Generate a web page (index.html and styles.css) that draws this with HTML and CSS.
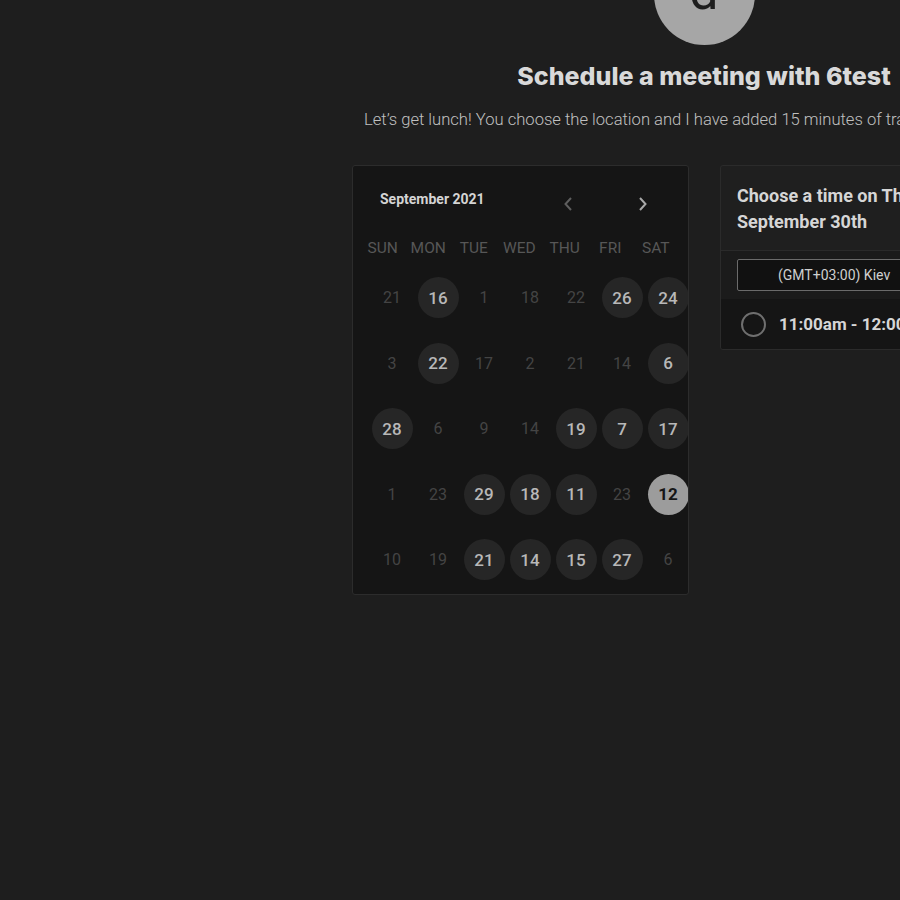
FILE: index.html
```html
<!DOCTYPE html>
<html lang="en">
<head>
<meta charset="utf-8">
<title>Schedule a meeting with 6test</title>
<link rel="stylesheet" href="styles.css">
</head>
<body>
<div class="page">
  <header class="intro">
    <div class="avatar"><span>d</span></div>
    <h1 class="title">Schedule a meeting with 6test</h1>
    <p class="desc">Let’s get lunch! You choose the location and I have added 15 minutes of travel time before and after the meeting.</p>
  </header>
  <main class="content">
    <section class="calendar">
      <div class="cal-head">
        <span class="month">September 2021</span>
        <div class="nav">
          <span class="chev prev"><svg width="10" height="16" viewBox="0 0 10 16"><path d="M8 2 L2.5 8 L8 14" fill="none" stroke="currentColor" stroke-width="2"/></svg></span>
          <span class="chev next"><svg width="10" height="16" viewBox="0 0 10 16"><path d="M2 2 L7.5 8 L2 14" fill="none" stroke="currentColor" stroke-width="2"/></svg></span>
        </div>
      </div>
      <div class="weekdays">
        <span>SUN</span><span>MON</span><span>TUE</span><span>WED</span><span>THU</span><span>FRI</span><span>SAT</span>
      </div>
      <div class="days">
        <span class="day">21</span><span class="day on">16</span><span class="day">1</span><span class="day">18</span><span class="day">22</span><span class="day on">26</span><span class="day on">24</span>
        <span class="day">3</span><span class="day on">22</span><span class="day">17</span><span class="day">2</span><span class="day">21</span><span class="day">14</span><span class="day on">6</span>
        <span class="day on">28</span><span class="day">6</span><span class="day">9</span><span class="day">14</span><span class="day on">19</span><span class="day on">7</span><span class="day on">17</span>
        <span class="day">1</span><span class="day">23</span><span class="day on">29</span><span class="day on">18</span><span class="day on">11</span><span class="day">23</span><span class="day sel">12</span>
        <span class="day">10</span><span class="day">19</span><span class="day on">21</span><span class="day on">14</span><span class="day on">15</span><span class="day on">27</span><span class="day">6</span>
      </div>
    </section>
    <section class="times">
      <div class="times-head">Choose a time on Thursday, September 30th</div>
      <div class="tz"><div class="tz-select">(GMT+03:00) Kiev</div></div>
      <div class="slot"><span class="radio"></span><span class="slot-text">11:00am - 12:00pm</span></div>
    </section>
  </main>
</div>
</body>
</html>
```
FILE: styles.css
```css
html, body {
  margin: 0;
  padding: 0;
  background: #1e1e1e;
  overflow: hidden;
  height: 900px;
}
body {
  font-family: Roboto, "Noto Sans", Arial, sans-serif;
  color: #d6d6d6;
}
.page {
  margin-left: 352px;
  width: 704px;
}
.intro {
  display: flex;
  flex-direction: column;
  align-items: center;
}
.avatar {
  width: 101px;
  height: 101px;
  margin-top: -56px;
  border-radius: 50%;
  background: #a6a6a6;
  display: flex;
  align-items: center;
  justify-content: center;
}
.avatar span {
  font-family: Roboto, sans-serif;
  font-size: 52px;
  line-height: 1;
  color: #1e1e1e;
  margin-top: -6px;
}
.title {
  margin: 15px 0 0;
  font-family: Inter, Roboto, sans-serif;
  font-weight: 800;
  font-size: 25px;
  line-height: 32px;
  color: #d9d9d9;
  white-space: nowrap;
}
.desc {
  align-self: flex-start;
  margin: 17px 0 0 12px;
  white-space: nowrap;
  font-size: 16.6px;
  font-weight: 300;
  line-height: 22px;
  color: #c0c0c0;
}
.content {
  margin-top: 34px;
  display: flex;
  gap: 31px;
  align-items: flex-start;
}
.calendar {
  box-sizing: border-box;
  width: 337px;
  height: 430px;
  background: #151515;
  border: 1px solid #2c2c2c;
  border-radius: 3px;
  overflow: hidden;
  flex-shrink: 0;
}
.cal-head {
  display: flex;
  align-items: center;
  height: 30px;
  margin-top: 18px;
  padding-left: 27px;
}
.month {
  font-size: 14px;
  font-weight: 700;
  color: #d4d4d4;
  width: 180px;
}
.nav {
  display: flex;
  gap: 65px;
  margin-left: 3px;
  padding-top: 9px;
}
.chev {
  display: flex;
  width: 10px;
  height: 16px;
}
.chev.prev { color: #5e5e5e; }
.chev.next { color: #a8a8a8; }
.weekdays {
  display: grid;
  grid-template-columns: repeat(7, 45.5px);
  margin: 23px 0 0 7px;
  font-size: 15.5px;
  line-height: 22px;
  color: #575757;
  text-align: center;
}
.days {
  display: grid;
  grid-template-columns: repeat(7, 46px);
  grid-auto-rows: 65.5px;
  margin: 6px 0 0 16px;
}
.day {
  display: flex;
  align-items: center;
  justify-content: center;
  font-size: 16px;
  color: #444;
}
.day.on, .day.sel {
  width: 41px;
  height: 41px;
  border-radius: 50%;
  justify-self: center;
  align-self: center;
  font-weight: 500;
  font-size: 17px;
}
.day.on {
  background: #262626;
  color: #b8b8b8;
}
.day.sel {
  background: #9c9c9c;
  color: #161616;
  font-weight: 700;
}
.times {
  box-sizing: border-box;
  width: 290px;
  flex-shrink: 0;
  border: 1px solid #2b2b2b;
  border-radius: 3px;
  overflow: hidden;
  background: #1f1f1f;
}
.times-head {
  box-sizing: border-box;
  height: 85px;
  padding: 17px 16px 0 16px;
  font-size: 18px;
  font-weight: 700;
  line-height: 26px;
  color: #d6d6d6;
  border-bottom: 1px solid #2a2a2a;
}
.tz {
  background: #1b1b1b;
  padding: 8px 16px;
  height: 32px;
}
.tz-select {
  box-sizing: border-box;
  height: 32px;
  border: 1px solid #6b6b6b;
  border-radius: 2px;
  background: #111;
  font-size: 14px;
  line-height: 30px;
  color: #cfcfcf;
  padding-left: 40px;
  white-space: nowrap;
}
.slot {
  display: flex;
  align-items: center;
  gap: 13px;
  height: 50px;
  padding-left: 20px;
  background: #151515;
}
.radio {
  box-sizing: border-box;
  width: 25px;
  height: 25px;
  border: 2px solid #6f6f6f;
  border-radius: 50%;
  flex-shrink: 0;
}
.slot-text {
  font-size: 17px;
  font-weight: 700;
  color: #d6d6d6;
  white-space: nowrap;
}
```
